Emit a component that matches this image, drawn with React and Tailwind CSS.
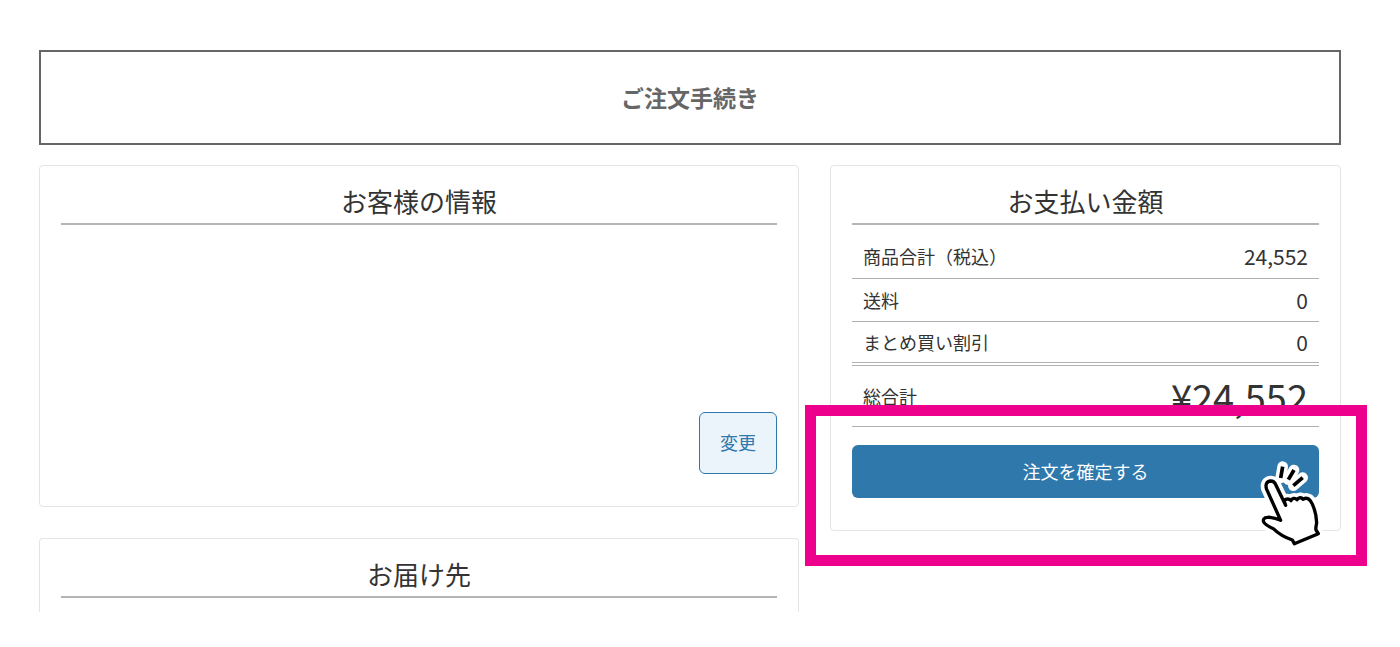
import React from 'react';

const rows = [
  { label: '商品合計（税込）', value: '24,552' },
  { label: '送料', value: '0' },
  { label: 'まとめ買い割引', value: '0' },
];

function Card({ title, className = '', children }) {
  return (
    <section className={`rounded border border-[#e4e4e4] px-[21px] pt-4 ${className}`}>
      <h2 className="border-b-2 border-[#b5b5b5] pb-1 text-center text-[26px] leading-[37px]">
        {title}
      </h2>
      {children}
    </section>
  );
}

function PointingHand() {
  const hand =
    'M152 241 L110 148 C105 134 110 124 122 123 C131 123 135 128 138 136 L167 196 L162 182 C168 177 176 175 183 182 C185 175 195 172 201 179 C207 172 214 171 219 178 C226 174 235 174 241 182 C254 201 259 231 260 248 C259 257 256 265 258 270 L265 281 L193 311 L187 300 C163 292 145 281 130 266 C116 260 105 253 101 246 C98 238 103 232 112 232 C127 231 139 235 152 241 Z';
  const sparks = 'M158 80 L152 114 M192 90 L175 119 M218 113 L190 137';

  return (
    <svg
      viewBox="90 60 195 261"
      className="pointer-events-none absolute -right-1.5 top-[15px] h-[87px] w-[65px]"
      fill="none"
      strokeLinejoin="round"
      aria-hidden="true"
    >
      <path d={hand} fill="#fff" stroke="#fff" strokeWidth="32" />
      <path d={sparks} stroke="#fff" strokeWidth="32" strokeLinecap="round" />
      <path d={hand} fill="#fff" stroke="#000" strokeWidth="10" />
      <path d={sparks} stroke="#000" strokeWidth="11" />
    </svg>
  );
}

export default function App() {
  return (
    <main className="bg-white pb-9 pl-[39px] pr-[59px] pt-[50px] font-['Noto_Sans_CJK_JP',sans-serif] text-[#333]">
      <h1 className="border-2 border-[#666] pb-7 pt-[27px] text-center text-[23px] font-bold leading-[36px] text-[#666]">
        ご注文手続き
      </h1>

      <div className="mt-5 grid grid-cols-[760fr_511fr] items-start gap-x-[31px]">
        <div>
          <Card title="お客様の情報" className="pb-8">
            <div className="mt-[187px] flex justify-end">
              <button
                type="button"
                className="rounded-md border border-[#2f78ac] bg-[#ebf3fb] px-5 pb-[17px] pt-[15px] text-lg leading-[28px] text-[#2f78ac]"
              >
                変更
              </button>
            </div>
          </Card>
          <Card title="お届け先" className="mt-[31px] rounded-b-none border-b-0 pb-[14px]" />
        </div>

        <Card title="お支払い金額" className="pb-8">
          <table className="mt-[10px] w-full">
            <tbody>
              {rows.map((row) => (
                <tr key={row.label} className="border-b border-[#b0b0b0] last:border-b-4 last:border-double">
                  <th scope="row" className="h-[43px] pl-[11px] text-left text-lg font-normal">
                    {row.label}
                  </th>
                  <td className="pr-[11px] text-right text-[21px] leading-7">{row.value}</td>
                </tr>
              ))}
            </tbody>
            <tfoot>
              <tr className="border-b border-[#b0b0b0]">
                <th scope="row" className="h-[62px] pl-[11px] text-left text-lg font-normal">
                  総合計
                </th>
                <td className="pr-[11px] text-right text-[38px] leading-[56px]">¥24,552</td>
              </tr>
            </tfoot>
          </table>

          <div className="relative mt-[18px]">
            <button
              type="button"
              className="block w-full rounded-md bg-[#2f78ac] py-3 text-lg leading-[29px] text-white"
            >
              注文を確定する
            </button>
            <div className="pointer-events-none absolute -bottom-[68px] -left-[47px] -right-12 -top-10 border-[11px] border-[#ec008c]" />
            <PointingHand />
          </div>
        </Card>
      </div>
    </main>
  );
}
